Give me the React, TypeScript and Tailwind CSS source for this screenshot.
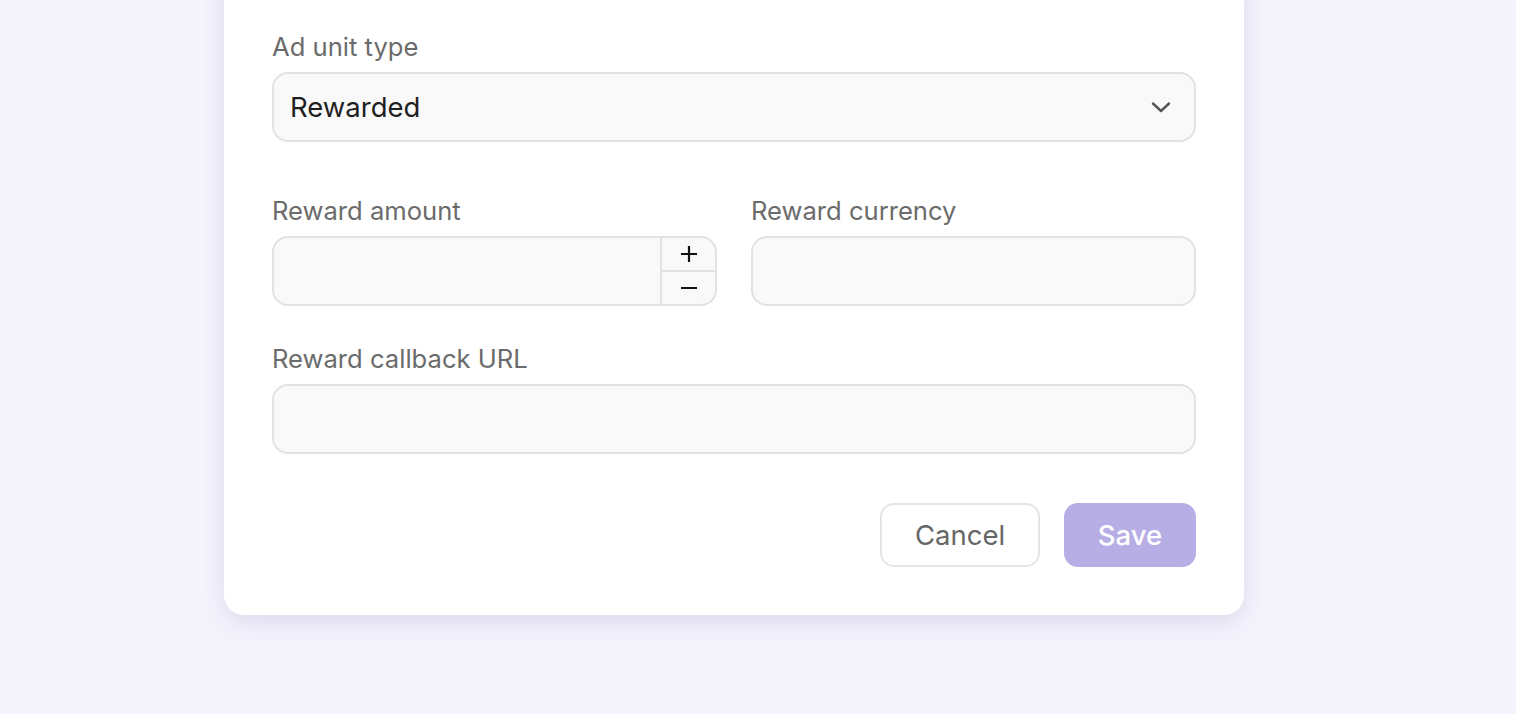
import React from "react";

function Label({ children }: { children: React.ReactNode }) {
  return <div className="h-8 flex items-center pb-[2px] text-[25.6px] leading-8 text-[#6b6b6b] mb-2 whitespace-nowrap">{children}</div>;
}

export default function App() {
  return (
    <div className="min-h-[714px] w-full bg-[#f5f4fd] flex justify-start" style={{ fontFamily: "Inter, 'Noto Sans', sans-serif" }}>
      <div className="w-[1020px] ml-[224px] -mt-[40px] mb-[99px] h-fit bg-white rounded-[20px] shadow-[0_8px_26px_rgba(60,50,120,0.13)] px-12 pt-[72px] pb-12">
        <Label>Ad unit type</Label>
        <div className="h-[70px] rounded-[16px] border-2 border-[#e2e2e2] bg-[#f9f9f9] flex items-center justify-between pl-[16px] pr-[22px]">
          <span className="text-[27.5px] text-[#1f1f1f] pt-[2px]">Rewarded</span>
          <svg width="22" height="14" viewBox="0 0 22 14" fill="none">
            <path d="M3 3.5 L11 11 L19 3.5" stroke="#555" strokeWidth="2.4" strokeLinecap="round" strokeLinejoin="round" />
          </svg>
        </div>

        <div className="grid grid-cols-2 gap-[34px] mt-[54px]">
          <div>
            <Label>Reward amount</Label>
            <div className="h-[70px] rounded-[16px] border-2 border-[#e2e2e2] bg-[#f9f9f9] flex overflow-hidden">
              <div className="flex-1" />
              <div className="w-[55px] border-l-2 border-[#e2e2e2] flex flex-col">
                <div className="flex-1 flex items-center justify-center border-b-2 border-[#e2e2e2]">
                  <svg width="18" height="18" viewBox="0 0 18 18"><path d="M9 1V17M1 9H17" stroke="#111" strokeWidth="2.2" /></svg>
                </div>
                <div className="flex-1 flex items-center justify-center">
                  <svg width="18" height="18" viewBox="0 0 18 18"><path d="M1 9H17" stroke="#111" strokeWidth="2.2" /></svg>
                </div>
              </div>
            </div>
          </div>
          <div>
            <Label>Reward currency</Label>
            <div className="h-[70px] rounded-[16px] border-2 border-[#e2e2e2] bg-[#f9f9f9]" />
          </div>
        </div>

        <div className="mt-[38px]">
          <Label>Reward callback URL</Label>
          <div className="h-[70px] rounded-[16px] border-2 border-[#e2e2e2] bg-[#f9f9f9]" />
        </div>

        <div className="flex justify-end gap-6 mt-[49px]">
          <button className="w-[160px] h-[64px] pt-[2px] rounded-[14px] border-2 border-[#e6e6e6] bg-white text-[27.5px] text-[#666]">Cancel</button>
          <button className="w-[132px] h-[64px] pt-[2px] rounded-[14px] bg-[#b8aee6] text-[27.5px] font-medium text-white">Save</button>
        </div>
      </div>
    </div>
  );
}
